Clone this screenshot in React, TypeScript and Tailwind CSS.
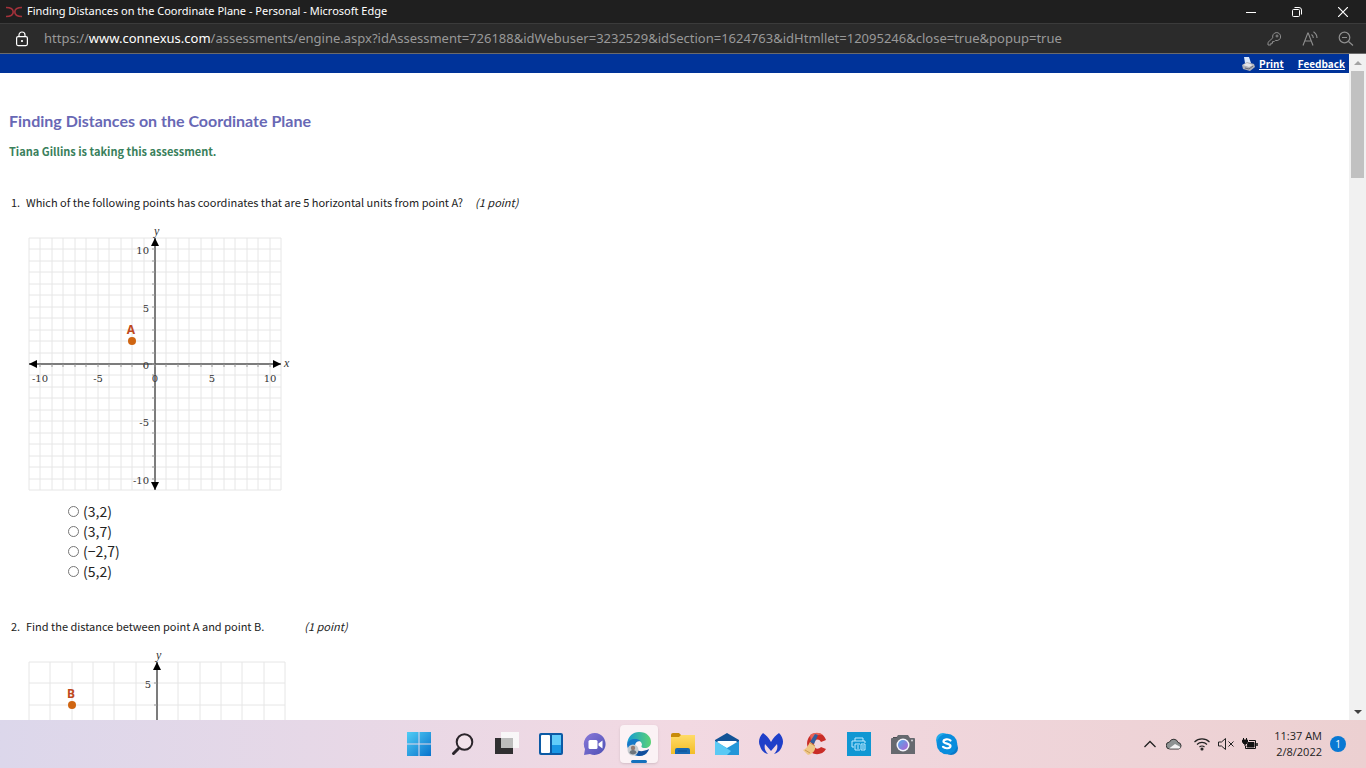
import React from "react";

const ui = "font-['Noto_Sans','Open_Sans',sans-serif]";
const body = "font-['Noto_Sans_CJK_SC',sans-serif]";

/* ---------- Window frame ---------- */

const TitleBar = () => (
  <header className={`${ui} flex h-6 shrink-0 items-center border-b border-[#3b3b3b] bg-[#1f1f1f] text-white`}>
    <svg className="ml-1.5 h-4 w-4" viewBox="0 0 16 16" fill="none" stroke="#a3323b" strokeWidth="1.600">
      <path d="M0 3.500c4.500 0 7.200 1 7.200 4.500S4.500 12.500 0 12.500M16 3.500c-4.500 0-7.200 1-7.200 4.500s2.700 4.500 7.200 4.500" />
    </svg>
    <h1 className="ml-[5px] flex-1 whitespace-nowrap text-[11px]">
      Finding Distances on the Coordinate Plane - Personal - Microsoft Edge
    </h1>
    <button aria-label="Minimize" className="flex w-[46px] justify-center">
      <svg width="10" height="10" viewBox="0 0 10 10" stroke="#fff"><path d="M0 5.500h10" /></svg>
    </button>
    <button aria-label="Restore" className="flex w-[46px] justify-center">
      <svg width="10" height="10" viewBox="0 0 10 10" fill="none" stroke="#fff">
        <rect x=".5" y="2.500" width="7" height="7" rx="1" />
        <path d="M2.500.5H7A2.500 2.500 0 0 1 9.500 3v4.500" />
      </svg>
    </button>
    <button aria-label="Close" className="flex w-[46px] justify-center">
      <svg width="10" height="10" viewBox="0 0 10 10" stroke="#fff" strokeWidth="1.200"><path d="M0 0l10 10M10 0L0 10" /></svg>
    </button>
  </header>
);

const AddressBar = () => (
  <div className={`${ui} flex h-[30px] shrink-0 items-center border-b border-[#6b6b6b] bg-[#2b2b2b] text-[#999]`}>
    <button aria-label="View site information" className="ml-4">
      <svg width="12" height="16" viewBox="0 0 12 16" fill="none" stroke="#fff" strokeWidth="1.200">
        <rect x=".6" y="5.600" width="10.800" height="9" rx="1.500" />
        <path d="M3 5.500V4a3 3 0 0 1 6 0v1.500" />
        <circle cx="6" cy="10" r=".5" fill="#fff" />
      </svg>
    </button>
    <p className="ml-4 flex-1 whitespace-nowrap text-[13px]">
      https://<span className="text-white">www.connexus.com</span>
      /assessments/engine.aspx?idAssessment=726188&amp;idWebuser=3232529&amp;idSection=1624763&amp;idHtmllet=12095246&amp;close=true&amp;popup=true
    </p>
    <div className="mr-3 flex items-center gap-5">
      <button aria-label="Passwords">
        <svg width="16" height="16" viewBox="0 0 16 16" fill="none" stroke="#8f8f8f">
          <path d="M6.800 6.800a4 4 0 1 1 2.600 2.600l-1.200 1.200H6.500v1.700H4.800V14H2v-2.600z" strokeLinejoin="round" />
          <circle cx="11" cy="5" r="1" />
        </svg>
      </button>
      <button aria-label="Read aloud">
        <svg width="16" height="16" viewBox="0 0 16 16" fill="none" stroke="#8f8f8f" strokeWidth="1.100">
          <path d="M1 14.500L5.800 2h.4L11 14.500M2.700 10h6.600M9.500 3.500q1.800 1.200 1.800 3.500M11.500.8q3.500 2.400 3.500 6.200" />
        </svg>
      </button>
      <button aria-label="Zoom out">
        <svg width="16" height="16" viewBox="0 0 16 16" fill="none" stroke="#8f8f8f" strokeWidth="1.200">
          <circle cx="6.500" cy="6.500" r="5.300" />
          <path d="M10.500 10.500L15 14.500M4 6.500h5" />
        </svg>
      </button>
    </div>
  </div>
);

const ScrollBar = () => (
  <div className="flex w-[17px] shrink-0 flex-col bg-[#f1f1f1]">
    <button aria-label="Scroll up" className="flex h-[17px] items-center justify-center">
      <svg width="8" height="4" viewBox="0 0 8 4"><path d="M0 4l4-4 4 4z" fill="#a3a3a3" /></svg>
    </button>
    <div className="mx-0.5 h-[107px] bg-[#c1c1c1]" />
    <button aria-label="Scroll down" className="mt-auto flex h-[17px] items-center justify-center">
      <svg width="8" height="4" viewBox="0 0 8 4"><path d="M0 0l4 4 4-4z" fill="#404040" /></svg>
    </button>
  </div>
);

/* ---------- Assessment ---------- */

type PlaneProps = {
  units: number; // grid squares on each side of the origin
  size: number; // grid width in pixels
  xLabels?: number[];
  yLabels: number[];
  point: { name: string; x: number; y: number };
};

const CoordinatePlane = ({ units, size, xLabels = [], yLabels, point }: PlaneProps) => {
  const half = size / 2;
  const step = half / units;
  const lines = Array.from({ length: units * 2 + 1 }, (_, i) => i - units);
  const at = (n: number) => Math.round(n * step);

  return (
    <svg
      width={size + 16}
      height={size + 16}
      viewBox={`${-half - 1} ${-half - 14} ${size + 16} ${size + 16}`}
      className="block font-['DejaVu_Serif',serif]"
      role="img"
      aria-label={`Coordinate plane with point ${point.name}`}
    >
      {lines.map((n) => (
        <path key={n} d={`M${at(n)} ${-half}V${half}M${-half} ${at(n)}H${half}`} stroke="#e6e6e6" fill="none" />
      ))}
      <path d={`M${-half} 0H${half}M0 ${-half}V${half}`} stroke="#555" strokeWidth="1.500" />
      {lines.slice(1, -1).map((n) => (
        <path key={n} d={`M${at(n)} 0v3M-3 ${at(n)}h3`} stroke="#999" fill="none" />
      ))}
      <path
        d={`M0 ${-half}l-4 8h8zM0 ${half}l-4-8h8zM${-half} 0l8-4v8zM${half} 0l-8-4v8z`}
        fill="#000"
      />
      <g fontSize="10" fill="#333">
        {xLabels.map((n) => (
          <text key={n} x={at(n)} y="18" textAnchor="middle">{n}</text>
        ))}
        {yLabels.map((n) => (
          <text key={n} x="-6" y={-at(n) + 5} textAnchor="end">{n}</text>
        ))}
      </g>
      <g className="font-['Liberation_Serif',serif]" fontSize="12" fontStyle="italic" fill="#333">
        <text x="-1" y={-half - 3}>y</text>
        <text x={half + 3} y="3">x</text>
      </g>
      <circle cx={at(point.x)} cy={-at(point.y)} r="4" fill="#cf6512" />
      <text
        x={at(point.x) - 1}
        y={-at(point.y) - 7}
        textAnchor="middle"
        fontSize="12"
        fontWeight="bold"
        fill="#bf4a1d"
        className="font-['Noto_Sans',sans-serif]"
      >
        {point.name}
      </text>
    </svg>
  );
};

const choices = ["(3,2)", "(3,7)", "(−2,7)", "(5,2)"];

const Assessment = () => (
  <main className={`${body} min-w-0 flex-1 overflow-hidden bg-white text-[11px] leading-4 text-[#222]`}>
    <nav className="flex h-[19px] items-center justify-end gap-3.5 bg-[#003399] pr-1 text-[10px] font-bold text-white">
      <a href="#print" className="flex items-center gap-1 underline">
        <svg width="13" height="14" viewBox="0 0 13 14">
          <path d="M2 0h5l2 6H3z" fill="#d8e7fb" />
          <path d="M0 8l5-3 7 2 1 3-5 4-7-2z" fill="#aeb0b8" />
          <path d="M1 8l4-2 6 2-4 2z" fill="#e4e5e9" />
          <path d="M3 11l4 1 4-3" stroke="#666976" fill="none" />
        </svg>
        Print
      </a>
      <a href="#feedback" className="underline">Feedback</a>
    </nav>

    <h2 className="ml-[9px] mt-[38px] font-['Lato',sans-serif] text-[16px] font-bold leading-5 text-[#6868b5]">
      Finding Distances on the Coordinate Plane
    </h2>
    <p className="ml-[9px] mt-3 font-bold text-[#39805b]">Tiana Gillins is taking this assessment.</p>

    <section className="mt-[35px]">
      <div className="ml-[11px] flex">
        <span className="w-[15px] shrink-0">1.</span>
        <p id="q1">Which of the following points has coordinates that are 5 horizontal units from point A?</p>
        <em className="ml-3">(1 point)</em>
      </div>
      <div className="ml-7 mt-3.5">
        <CoordinatePlane
          units={11}
          size={252}
          xLabels={[-10, -5, 0, 5, 10]}
          yLabels={[-10, -5, 0, 5, 10]}
          point={{ name: "A", x: -2, y: 2 }}
        />
      </div>
      <div role="radiogroup" aria-labelledby="q1" className="ml-[68px] mt-[9px] text-[14px] leading-5">
        {choices.map((choice) => (
          <label key={choice} className="flex items-center gap-1">
            <input
              type="radio"
              name="q1"
              value={choice}
              className="h-[11px] w-[11px] appearance-none rounded-full border border-[#767676] bg-white checked:bg-[#0075ff]"
            />
            {choice}
          </label>
        ))}
      </div>
    </section>

    <section className="mt-[37px]">
      <div className="ml-[11px] flex">
        <span className="w-[15px] shrink-0">2.</span>
        <p>Find the distance between point A and point B.</p>
        <em className="ml-10">(1 point)</em>
      </div>
      <div className="ml-7 mt-3.5">
        <CoordinatePlane units={6} size={256} yLabels={[5]} point={{ name: "B", x: -4, y: 4 }} />
      </div>
    </section>
  </main>
);

/* ---------- Taskbar ---------- */

const apps = [
  {
    name: "Start",
    icon: (
      <g fill="url(#sky)">
        <path d="M0 0h11.500v11.500H0zM12.500 0H24v11.500H12.500zM0 12.500h11.500V24H0zM12.500 12.500H24V24H12.500z" />
      </g>
    ),
  },
  {
    name: "Search",
    icon: (
      <g fill="none" stroke="#2b252b" strokeLinecap="round">
        <circle cx="13.500" cy="10" r="7.800" fill="#f7e9ef" fillOpacity=".6" strokeWidth="2" />
        <path d="M7.500 16.500L2.500 21.500" strokeWidth="3" />
      </g>
    ),
  },
  {
    name: "Task View",
    icon: (
      <>
        <path d="M0 6h18v16H0z" fill="#302f31" />
        <path d="M6 0h18v16H6z" fill="#fafafa" fillOpacity=".9" />
        <path d="M6 6h12v10H6z" fill="#bcbcbc" />
      </>
    ),
  },
  {
    name: "Widgets",
    icon: (
      <>
        <rect y="1" width="24" height="22" rx="2" fill="#0c5aa5" />
        <rect x="2" y="3" width="9" height="18" rx="1" fill="#fff" />
        <path d="M13 3h9v10h-9z" fill="#61ccfa" />
        <path d="M13 13h9v8h-9z" fill="#1996e4" />
      </>
    ),
  },
  {
    name: "Chat",
    icon: (
      <>
        <path d="M12 1a11 11 0 1 1-5 21l-6 1 1-6A11 11 0 0 1 12 1z" fill="url(#violet)" />
        <rect x="5.500" y="8" width="9" height="9" rx="1.500" fill="#fff" />
        <path d="M15.500 11.500l4-3v8l-4-3z" fill="#fff" />
      </>
    ),
  },
  {
    name: "Microsoft Edge",
    active: true,
    icon: (
      <>
        <path d="M0 12C1 4 6 0 12 0c8 0 12 5 12 10 0 4-3 6-6 6-4 0-4-1.500-3-3 0-3-3-5-6-5-5 0-8 2-9 4z" fill="url(#wave)" />
        <path d="M0 12c1-3 4-5 8-5 2 0 4 .5 5.500 2C9 9 8 12 8 14c0 5 5 9 12 7-2 2-5 3-8 3C5 24 0 18 0 12z" fill="#1578c8" />
        <path d="M8 14c0 5 6 7 14 3-1 4-5 7-10 7-4-1-6-6-4-10z" fill="#114d9c" />
        <circle cx="6" cy="18" r="5.500" fill="#c6cbd0" />
        <circle cx="6" cy="16" r="2.200" fill="#927b73" />
        <path d="M2.500 21c0-4 7-4 7 0a5 5 0 0 1-7 0z" fill="#6e747c" />
      </>
    ),
  },
  {
    name: "File Explorer",
    icon: (
      <>
        <path d="M0 3q0-2 2-2h6l2 2v4H0z" fill="#c88b09" />
        <path d="M0 5h8l2-2h14v19H0z" fill="url(#gold)" />
        <path d="M4 22v-4q0-2 2-2h11q2 0 2 2v4z" fill="#1768b3" />
        <path d="M7 19h9" stroke="#0c4e92" />
      </>
    ),
  },
  {
    name: "Mail",
    icon: (
      <>
        <path d="M0 8l12-7 12 7v2H0z" fill="#125396" />
        <path d="M2 9h20l-9 9z" fill="#fff" />
        <path d="M0 9l12 7-11 7H0z" fill="#35b9ee" />
        <path d="M24 9v14H0z" fill="#2396d8" />
        <path d="M0 9l16 10-4 4H0z" fill="#5bc9f4" />
      </>
    ),
  },
  {
    name: "Malwarebytes",
    icon: (
      <path
        d="M4 1c3 2 6 5 8 9 2-4 5-7 8-9 4 4 5 9 3 13-1 4-4 7-8 8 3-3 4-6 3-10l-6 7-6-7c-1 4 0 7 3 10-4-1-7-4-8-8-2-4-1-9 3-13z"
        fill="#1f3fc9"
      />
    ),
  },
  {
    name: "CCleaner",
    icon: (
      <>
        <path d="M23 8l-5 2c-2-4-7-3-7 2s4 6 7 3l5 2c-3 6-12 7-16 2C1 12 5 1 14 1c4 0 7 2 9 7z" fill="#c92d27" />
        <path d="M7 3c4-3 10-3 13 0-5-1-10 2-12 6z" fill="#e86458" />
        <path d="M12 2l3 1-4 9-4-2z" fill="#315f9f" />
        <path d="M7 10l5 4c1 5-3 8-7 9l-5-5c3-1 5-4 7-8z" fill="#efc785" />
        <path d="M7 11l5 3M2 18l5 3" stroke="#c99a55" />
      </>
    ),
  },
  {
    name: "HP Smart",
    icon: (
      <>
        <path d="M0 0h24v24H0z" fill="#1097d3" />
        <path d="M8 9V6h8v3M7 15H5V9h13v2M8 18v-6h5M8 18h5M10 14h2M10 16h2M14 12h4v6h-4zM15 14h2M15 16h2" fill="none" stroke="#bfeaff" />
      </>
    ),
  },
  {
    name: "Camera",
    icon: (
      <>
        <path d="M1 6h4l2-3h10l2 3h4q1 0 1 1v15H0V7q0-1 1-1z" fill="#66696f" />
        <path d="M2 5h4v1H2z" fill="#4b4d52" />
        <circle cx="12" cy="13" r="6.500" fill="#f4f5fc" />
        <circle cx="12" cy="13" r="5" fill="url(#lens)" />
        <circle cx="21" cy="8.500" r="1" fill="#d5d5d9" />
      </>
    ),
  },
  {
    name: "Skype",
    icon: (
      <>
        <circle cx="8" cy="8" r="7" fill="#22a9e8" />
        <circle cx="16" cy="16" r="7" fill="#0879c9" />
        <circle cx="12" cy="12" r="10.300" fill="#098ddd" />
        <path
          d="M15.500 8.500c-2-2-7-1.500-7 1s7 1.800 7 4.500-5.500 3-7.500.8"
          fill="none"
          stroke="#fff"
          strokeWidth="2.200"
          strokeLinecap="round"
        />
      </>
    ),
  },
];

const Taskbar = () => (
  <footer className="grid h-12 shrink-0 grid-cols-[1fr_auto_1fr] items-center bg-linear-to-r from-[#dcd7eb] via-[#f2d9e2] to-[#ecd0d1] font-['Open_Sans',sans-serif] text-[11px] leading-4 text-[#222]">
    <svg width="0" height="0" aria-hidden="true">
      <defs>
        <linearGradient id="sky" x1="0" y1="0" x2="1" y2="1">
          <stop stopColor="#50cdf5" />
          <stop offset="1" stopColor="#0872cc" />
        </linearGradient>
        <linearGradient id="violet" x1="0" y1="0" x2="1" y2="1">
          <stop stopColor="#8a79d9" />
          <stop offset="1" stopColor="#4d50b5" />
        </linearGradient>
        <linearGradient id="wave">
          <stop stopColor="#149bd5" />
          <stop offset="1" stopColor="#5bd375" />
        </linearGradient>
        <linearGradient id="gold" x1="0" y1="0" x2="0" y2="1">
          <stop stopColor="#ffdb68" />
          <stop offset="1" stopColor="#f3bd27" />
        </linearGradient>
        <linearGradient id="lens" x1="0" y1="0" x2="1" y2="1">
          <stop stopColor="#4fabe9" />
          <stop offset="1" stopColor="#b45fd2" />
        </linearGradient>
      </defs>
    </svg>
    <div className="flex">
      {apps.map((app) => (
        <button key={app.name} aria-label={app.name} className="flex h-12 w-11 items-center justify-center">
          <span
            className={
              app.active
                ? "relative flex h-[38px] w-[38px] items-center justify-center rounded bg-[#fbf2f5] shadow-sm"
                : "flex"
            }
          >
            <svg width="24" height="24" viewBox="0 0 24 24">{app.icon}</svg>
            {app.active && <span className="absolute bottom-0 h-[3px] w-4 rounded-full bg-[#1471bd]" />}
          </span>
        </button>
      ))}
    </div>
    <div className="flex items-center justify-end pr-5">
      <button aria-label="Show hidden icons">
        <svg width="12" height="8" viewBox="0 0 12 8" fill="none" stroke="#222" strokeWidth="1.300"><path d="M.5 7L6 1.500 11.500 7" /></svg>
      </button>
      <button aria-label="OneDrive" className="ml-2.5">
        <svg width="16" height="12" viewBox="0 0 16 12" stroke="#333">
          <path d="M4 11a3.500 3.500 0 0 1-.5-7A4.500 4.500 0 0 1 12 4.500 3.300 3.300 0 0 1 12.500 11z" fill="#8d9292" />
          <path d="M3 10.500L9 6l5.500 3-1 1.500z" fill="#f3f3f3" stroke="none" />
        </svg>
      </button>
      <button aria-label="Wi-Fi" className="ml-3">
        <svg width="16" height="14" viewBox="0 0 16 14" fill="none" stroke="#222" strokeWidth="1.100">
          <path d="M.5 5a10.500 10.500 0 0 1 15 0M3 7.500a7 7 0 0 1 10 0M5.500 10a3.500 3.500 0 0 1 5 0" />
          <circle cx="8" cy="12" r="1" fill="#222" />
        </svg>
      </button>
      <button aria-label="Volume muted" className="ml-2">
        <svg width="16" height="14" viewBox="0 0 16 14" fill="none" stroke="#222">
          <path d="M.5 5h3l4-3.500v11L3.500 9h-3zM10.500 4.500l5 5M15.500 4.500l-5 5" />
        </svg>
      </button>
      <button aria-label="Battery" className="ml-2">
        <svg width="16" height="12" viewBox="0 0 16 12" fill="none" stroke="#111">
          <path d="M7 2.500h6.500v8H3.500V8" />
          <path d="M6 4.500h6v4.500H5z" fill="#111" />
          <path d="M15 5v3" strokeWidth="1.500" />
          <path d="M1.500 0v2M4.500 0v2M3 5v3" />
          <path d="M.5 2h5v2L4 6H2L.5 4z" fill="#111" />
        </svg>
      </button>
      <button className="ml-4 text-right">
        <time className="block">11:37 AM</time>
        <time className="block">2/8/2022</time>
      </button>
      <button aria-label="1 new notification" className="ml-2 h-4 w-4 rounded-full bg-[#0878d3] text-[10px] text-white">
        1
      </button>
    </div>
  </footer>
);

const App = () => (
  <div className="flex h-screen flex-col overflow-hidden">
    <TitleBar />
    <AddressBar />
    <div className="flex min-h-0 flex-1">
      <Assessment />
      <ScrollBar />
    </div>
    <Taskbar />
  </div>
);

export default App;
